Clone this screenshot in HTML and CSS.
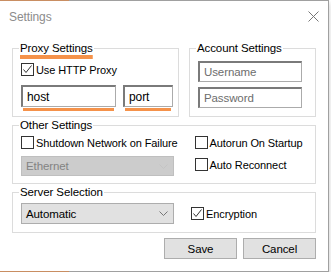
FILE: index.html
```html
<!DOCTYPE html>
<html lang="en">

<head>
    <meta charset="UTF-8">
    <title>Settings</title>
    <link rel="stylesheet" href="styles.css">
</head>

<body>
    <div class="window">
        <div class="titlebar">
            <span class="title">Settings</span>
            <svg class="close" width="11" height="11" viewBox="0 0 11 11">
                <path d="M0.5 0.5 L10.5 10.5 M10.5 0.5 L0.5 10.5" stroke="#777" stroke-width="1" fill="none" />
            </svg>
        </div>
        <div class="content">
            <div class="row">
                <fieldset class="group proxy">
                    <legend class="marked">Proxy Settings</legend>
                    <label class="check">
                        <span class="box"><svg width="11" height="11" viewBox="0 0 11 11"><path d="M1.5 5.5 L4 8.5 L9.5 1.5" stroke="#333" stroke-width="1" fill="none" /></svg></span>
                        Use HTTP Proxy
                    </label>
                    <div class="hostport">
                        <div class="field host">
                            <input type="text" value="host">
                            <i class="hl"></i>
                        </div>
                        <div class="field port">
                            <input type="text" value="port">
                            <i class="hl"></i>
                        </div>
                    </div>
                </fieldset>
                <fieldset class="group account">
                    <legend>Account Settings</legend>
                    <input type="text" placeholder="Username">
                    <input type="password" placeholder="Password">
                </fieldset>
            </div>

            <fieldset class="group other">
                <legend>Other Settings</legend>
                <div class="cols">
                    <div class="col left">
                        <label class="check"><span class="box"></span>Shutdown Network on Failure</label>
                        <div class="combo disabled">
                            <span>Ethernet</span>
                            <svg width="9" height="5" viewBox="0 0 9 5"><path d="M0.5 0.5 L4.5 4.5 L8.5 0.5" stroke="#c4c4c4" fill="none" /></svg>
                        </div>
                    </div>
                    <div class="col right">
                        <label class="check"><span class="box"></span>Autorun On Startup</label>
                        <label class="check"><span class="box"></span>Auto Reconnect</label>
                    </div>
                </div>
            </fieldset>

            <fieldset class="group server">
                <legend>Server Selection</legend>
                <div class="cols">
                    <div class="combo">
                        <span>Automatic</span>
                        <svg width="9" height="5" viewBox="0 0 9 5"><path d="M0.5 0.5 L4.5 4.5 L8.5 0.5" stroke="#777" fill="none" /></svg>
                    </div>
                    <label class="check enc">
                        <span class="box"><svg width="11" height="11" viewBox="0 0 11 11"><path d="M1.5 5.5 L4 8.5 L9.5 1.5" stroke="#333" stroke-width="1" fill="none" /></svg></span>
                        Encryption
                    </label>
                </div>
            </fieldset>

            <div class="buttons">
                <button>Save</button>
                <button>Cancel</button>
            </div>
        </div>
    </div>
</body>

</html>
```

FILE: styles.css
```css
body {
    margin: 0;
    background: #fff;
    font-family: "Liberation Sans", Arial, sans-serif;
    font-size: 11px;
    letter-spacing: -0.1px;
    color: #000;
}

/* 对话框外框 */
.window {
    width: 329px;
    height: 272px;
    box-sizing: border-box;
    background: #fff;
    border-right: 1px solid #a9a9a9;
    border-bottom: 1px solid #a9a9a9;
    border-top: 1px solid #a0a0a0;
    border-image: linear-gradient(to right, #c98e62 0 70px, #a0a0a0 70px) 1;
    box-shadow: 0 3px 5px rgba(0, 0, 0, 0.22);
}

.titlebar {
    height: 40px;
    display: flex;
    justify-content: space-between;
    padding: 0 9px 0 9px;
    box-sizing: border-box;
}

.title {
    font-size: 12px;
    color: #8c8c8c;
    margin-top: 9px;
}

.close {
    margin-top: 10px;
}

.content {
    padding: 0 12px;
}

.row {
    display: flex;
    gap: 10px;
}

/* 分组框 */
.group {
    margin: 0;
    padding: 0 5px 0 8px;
    border: 1px solid #dcdcdc;
    min-width: 0;
}

.group legend {
    margin-left: -2px;
    padding: 0 1px;
    line-height: 14px;
    font-size: 11.5px;
}

.marked {
    text-decoration: underline;
    text-decoration-color: #f5924a;
    text-decoration-thickness: 4px;
    text-underline-offset: 3px;
    text-decoration-skip-ink: none;
}

.proxy {
    width: 167px;
    box-sizing: border-box;
    padding-top: 8px;
    padding-bottom: 5px;
}

.account {
    width: 127px;
    box-sizing: border-box;
    padding-top: 6px;
    display: flex;
    flex-direction: column;
    gap: 5px;
}

.other {
    margin-top: 1px;
    padding-top: 4px;
    padding-bottom: 7px;
}

.server {
    margin-top: 1px;
    padding-top: 4px;
    padding-bottom: 8px;
}

/* 复选框 */
.check {
    display: flex;
    align-items: center;
    gap: 2px;
    height: 13px;
    white-space: nowrap;
}

.box {
    width: 11px;
    height: 11px;
    border: 1px solid #333;
    display: flex;
    background: #fff;
}

/* 输入框 */
input {
    font-family: inherit;
    font-size: 12px;
    letter-spacing: inherit;
    margin: 0;
    box-sizing: border-box;
    height: 21px;
    padding: 0 4px;
    border: 1px solid #ababab;
    border-top: 2px solid #7a7a7a;
    border-left: 2px solid #7a7a7a;
    outline: none;
}

input::placeholder {
    color: #6d6d6d;
}

.account input {
    width: 104px;
    font-size: 11.5px;
}

.hostport {
    display: flex;
    gap: 7px;
    margin-top: 9px;
}

.field {
    display: flex;
    flex-direction: column;
}

.field input {
    height: 22px;
    width: 100%;
}

.host {
    width: 95px;
}

.port {
    width: 50px;
}

.hl {
    display: block;
    height: 3px;
    margin: 1px 2px 0;
    background: #f5924a;
}

.cols {
    display: flex;
    gap: 17px;
}

.col {
    display: flex;
    flex-direction: column;
}

.left {
    gap: 7px;
}

.right {
    gap: 9px;
}

/* 下拉框 */
.combo {
    width: 153px;
    height: 20px;
    box-sizing: border-box;
    border: 1px solid #adadad;
    background: #e1e1e1;
    display: flex;
    align-items: center;
    justify-content: space-between;
    padding: 0 5px 0 4px;
    font-size: 11.5px;
}

.combo.disabled {
    background: #cccccc;
    border-color: #bfbfbf;
    color: #838383;
}

.server .combo {
    height: 21px;
}

.enc {
    margin-top: 4px;
}

.buttons {
    display: flex;
    justify-content: flex-end;
    gap: 6px;
    margin-top: 5px;
}

button {
    width: 73px;
    height: 21px;
    font-family: inherit;
    font-size: 11.5px;
    letter-spacing: inherit;
    background: #e1e1e1;
    border: 1px solid #adadad;
    padding: 0;
    margin: 0;
}
```
